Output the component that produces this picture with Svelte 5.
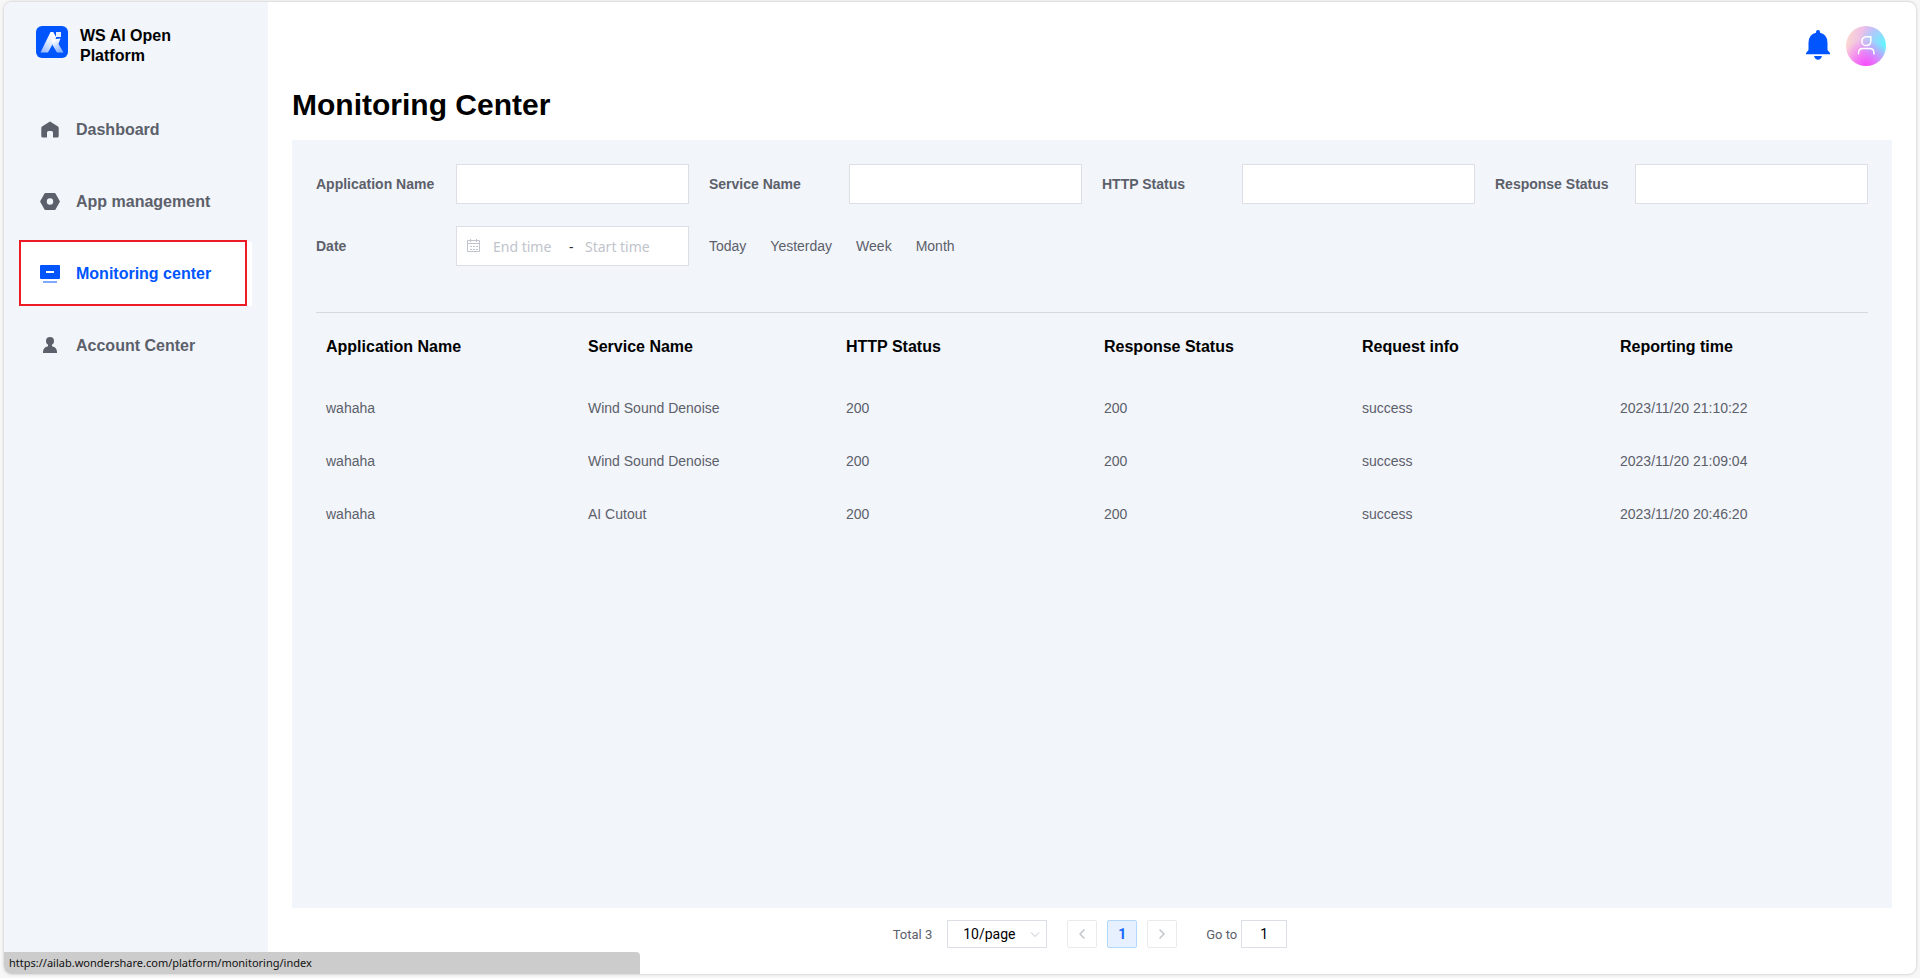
<script lang="ts">
  type MenuItem = { label: string; icon: "home" | "app" | "monitor" | "account" };

  type LogRow = {
    app: string;
    service: string;
    http: number;
    response: number;
    info: string;
    time: string;
  };

  const menu: MenuItem[] = [
    { label: "Dashboard", icon: "home" },
    { label: "App management", icon: "app" },
    { label: "Monitoring center", icon: "monitor" },
    { label: "Account Center", icon: "account" },
  ];

  const fields = [
    { id: "app-name", label: "Application Name" },
    { id: "service-name", label: "Service Name" },
    { id: "http-status", label: "HTTP Status" },
    { id: "response-status", label: "Response Status" },
  ];

  const ranges = ["Today", "Yesterday", "Week", "Month"];

  const columns = [
    "Application Name",
    "Service Name",
    "HTTP Status",
    "Response Status",
    "Request info",
    "Reporting time",
  ];

  const rows: LogRow[] = [
    { app: "wahaha", service: "Wind Sound Denoise", http: 200, response: 200, info: "success", time: "2023/11/20 21:10:22" },
    { app: "wahaha", service: "Wind Sound Denoise", http: 200, response: 200, info: "success", time: "2023/11/20 21:09:04" },
    { app: "wahaha", service: "AI Cutout", http: 200, response: 200, info: "success", time: "2023/11/20 20:46:20" },
  ];

  let active = $state("Monitoring center");
  let page = $state("1");
</script>

<div class="window">
  <aside class="sidebar">
    <div class="brand">
      <svg class="logo" viewBox="0 0 32 32" aria-hidden="true">
        <defs>
          <linearGradient id="peak" x1="0.7" y1="0" x2="0.2" y2="1">
            <stop offset="0" stop-color="#fff" />
            <stop offset="0.45" stop-color="#e4edff" />
            <stop offset="1" stop-color="#9dbdff" />
          </linearGradient>
          <linearGradient id="leg" x1="0" y1="0" x2="0.5" y2="1">
            <stop offset="0.2" stop-color="#fff" />
            <stop offset="1" stop-color="#8db3ff" />
          </linearGradient>
        </defs>
        <rect width="32" height="32" rx="6" fill="#0055ff" />
        <path d="M14.500 6h2.800l3 5.500L12 26.500H4.500z" fill="url(#peak)" />
        <path d="M16 13.500 24.500 12.500 22.500 18 27.500 26.500H21L16.500 19z" fill="url(#leg)" />
        <rect x="20" y="6" width="5" height="5" fill="#e8f0ff" />
      </svg>
      <span class="brand-name">WS AI Open Platform</span>
    </div>
    <nav class="menu">
      {#each menu as item}
        <a
          href="#{item.icon}"
          class="menu-item"
          class:active={active === item.label}
          onclick={() => (active = item.label)}
        >
          <svg class="menu-icon" viewBox="0 0 20 20" fill="currentColor" aria-hidden="true">
            {#if item.icon === "home"}
              <path d="M10 1.500 18 6.500Q18.700 7 18.700 8V16Q18.700 17.500 17.300 17.500H13V12.500Q13 11 11.500 11H8.500Q7 11 7 12.500V17.500H2.700Q1.300 17.500 1.300 16V8Q1.300 7 2 6.500z" />
            {:else if item.icon === "app"}
              <path fill-rule="evenodd" d="M5.500 1h9q.7 0 1 .6l4.200 7.300q.3.600 0 1.200l-4.200 7.300q-.3.600-1 .6h-9q-.7 0-1-.6L.3 10.100q-.3-.6 0-1.200l4.200-7.300q.3-.6 1-.6zM10 6.300a3.200 3.200 0 1 0 0 6.400 3.200 3.200 0 0 0 0-6.400z" />
            {:else if item.icon === "monitor"}
              <path fill-rule="evenodd" d="M1 1h18q1 0 1 1v12q0 1-1 1H1q-1 0-1-1V2q0-1 1-1zM6 7v2h8V7z" />
              <path d="M3 17h14v2H3z" opacity="0.5" />
            {:else}
              <circle cx="10" cy="5" r="4" />
              <path d="M8 8h4v2.200q5 1 5 5.800v1H3v-1q0-4.800 5-5.800z" />
            {/if}
          </svg>
          {item.label}
          {#if active === item.label}
            <span class="marker"></span>
          {/if}
        </a>
      {/each}
    </nav>
  </aside>

  <main class="main">
    <header class="topbar">
      <button class="bell" aria-label="Notifications">
        <svg viewBox="0 0 24 30" fill="#0055ff" aria-hidden="true">
          <path d="M10 2a2 2 0 0 1 4 0v.7q7.500 1.800 7.500 10V20l2.500 3v1.300H0V23l2.500-3v-7.300q0-8.200 7.500-10z" />
          <path d="M8 26h8q-1 3.700-4 3.700T8 26z" />
        </svg>
      </button>
      <button class="avatar" aria-label="Account">
        <svg viewBox="0 0 40 40" fill="none" stroke="#fff" stroke-width="1.500" aria-hidden="true">
          <path d="M25.500 10.800h-5.300a4.400 4.400 0 0 0-4.400 4.400 4.400 4.400 0 0 0 4.400 4.400c3 0 4.600-2 4.600-4.500v-4.300M12.500 28.500V27q0-4.500 4.500-4.500h6.500q4.500 0 4.500 4.500v1.500" />
        </svg>
      </button>
    </header>

    <h1>Monitoring Center</h1>

    <section class="panel">
      <form class="filters">
        {#each fields as field}
          <div class="field">
            <label for={field.id}>{field.label}</label>
            <input class="box" id={field.id} type="text" />
          </div>
        {/each}
        <div class="field">
          <label for="date-from">Date</label>
          <div class="box range">
            <svg class="calendar" viewBox="0 0 14 14" fill="none" stroke="#c0c4cc" aria-hidden="true">
              <path d="M.5 1.500h12v11H.5zM.5 4.500h12M3.500 0v3M9.500 0v3" />
              <path d="M3 7.500h8M3 10.500h8" stroke-dasharray="2 1" />
            </svg>
            <input id="date-from" type="text" placeholder="End time" />
            <span class="dash">-</span>
            <input type="text" placeholder="Start time" aria-label="Start time" />
          </div>
        </div>
        <div class="quick">
          {#each ranges as range}
            <button type="button">{range}</button>
          {/each}
        </div>
      </form>

      <table>
        <thead>
          <tr>
            {#each columns as column}
              <th>{column}</th>
            {/each}
          </tr>
        </thead>
        <tbody>
          {#each rows as row}
            <tr>
              <td>{row.app}</td>
              <td>{row.service}</td>
              <td>{row.http}</td>
              <td>{row.response}</td>
              <td>{row.info}</td>
              <td>{row.time}</td>
            </tr>
          {/each}
        </tbody>
      </table>
    </section>

    <footer class="pagination">
      <span class="total">Total {rows.length}</span>
      <div class="page-size">
        <select aria-label="Page size">
          <option>10/page</option>
          <option>20/page</option>
          <option>50/page</option>
        </select>
        <svg viewBox="0 0 10 6" fill="none" stroke="#c0c4cc" aria-hidden="true"><path d="M1 .5l4 4 4-4" /></svg>
      </div>
      <div class="pager">
        <button aria-label="Previous page">
          <svg viewBox="0 0 6 10" fill="none" stroke="#c0c4cc" stroke-width="1.500"><path d="M5.500.5 1 5l4.500 4.500" /></svg>
        </button>
        <button class="current">1</button>
        <button aria-label="Next page">
          <svg viewBox="0 0 6 10" fill="none" stroke="#c0c4cc" stroke-width="1.500"><path d="M.5.5 5 5 .5 9.500" /></svg>
        </button>
      </div>
      <label class="jump">
        Go to
        <input type="text" bind:value={page} />
      </label>
    </footer>
  </main>

  <div class="status">https://ailab.wondershare.com/platform/monitoring/index</div>
</div>

<style>
  :global(body) {
    background: #f7f7f7;
    font-family: "Liberation Sans", Arial, sans-serif;
    font-size: 14px;
    color: #5c606a;
  }
  :global(#app) {
    padding: 2px 0 4px;
  }
  * {
    box-sizing: border-box;
  }
  button {
    border: 0;
    padding: 0;
    background: none;
    font: inherit;
    color: inherit;
    cursor: pointer;
  }
  input,
  select {
    font: inherit;
    outline: none;
  }

  .window {
    position: relative;
    display: flex;
    min-height: calc(100vh - 6px);
    margin: 0 4px;
    border-radius: 8px;
    overflow: hidden;
    background: #fff;
    box-shadow: 0 0 3px rgba(0, 0, 0, 0.25);
  }

  .sidebar {
    width: 264px;
    flex-shrink: 0;
    padding-top: 24px;
    background: #f2f5fa;
  }
  .brand {
    display: flex;
    gap: 12px;
    padding: 0 32px;
  }
  .logo {
    width: 32px;
    height: 32px;
  }
  .brand-name {
    width: 120px;
    font-size: 16px;
    font-weight: 700;
    line-height: 20px;
    color: #000;
  }
  .menu {
    display: flex;
    flex-direction: column;
    gap: 8px;
    padding: 32px 16px 0;
  }
  .menu-item {
    position: relative;
    display: flex;
    align-items: center;
    gap: 16px;
    height: 64px;
    padding: 0 20px;
    font-size: 16px;
    font-weight: 700;
    color: #5c606a;
    text-decoration: none;
  }
  .menu-item.active {
    color: #0055ff;
    background: #fff;
  }
  .menu-icon {
    width: 20px;
    height: 20px;
  }
  .marker {
    position: absolute;
    top: -2px;
    left: -1px;
    right: 5px;
    bottom: 0;
    border: 2px solid #ed1c24;
  }

  .main {
    flex: 1;
    display: flex;
    flex-direction: column;
    min-width: 0;
    padding: 24px 24px 26px;
  }
  .topbar {
    display: flex;
    justify-content: flex-end;
    gap: 16px;
    padding-right: 6px;
  }
  .bell {
    width: 24px;
    height: 38px;
  }
  .bell svg,
  .avatar svg {
    display: block;
  }
  .avatar {
    width: 40px;
    height: 40px;
    border-radius: 50%;
    background:
      radial-gradient(circle at 50% 100%, #f74cfb 0%, rgba(247, 76, 251, 0) 60%),
      radial-gradient(circle at 100% 45%, #5cf8ff 0%, rgba(92, 248, 255, 0) 60%),
      linear-gradient(100deg, #ffdccb, #e3adfa 60%);
  }
  h1 {
    margin: 21px 0 17px;
    font-size: 30px;
    line-height: 36px;
    font-weight: 700;
    color: #000;
  }

  .panel {
    flex: 1;
    padding: 24px;
    background: #f2f5fa;
  }
  .filters {
    display: grid;
    grid-template-columns: repeat(4, 1fr);
    gap: 22px 20px;
    padding-bottom: 46px;
    border-bottom: 1px solid #d5d9e0;
  }
  .field {
    display: flex;
    align-items: center;
  }
  .field > label {
    width: 140px;
    flex-shrink: 0;
    font-weight: 700;
  }
  .box {
    flex: 1;
    min-width: 0;
    height: 40px;
    padding: 0 10px;
    border: 1px solid #dcdfe6;
    background: #fff;
  }
  .range {
    display: flex;
    align-items: center;
    font-family: "Noto Sans", "Open Sans", sans-serif;
  }
  .calendar {
    width: 14px;
    height: 14px;
    flex-shrink: 0;
    margin-right: 12px;
  }
  .range input {
    width: 72px;
    padding: 0;
    border: 0;
    background: none;
  }
  .range input::placeholder {
    color: #c0c4cc;
  }
  .dash {
    width: 20px;
    padding-left: 4px;
    color: #303133;
  }
  .quick {
    display: flex;
    align-items: center;
    gap: 24px;
  }

  table {
    width: 100%;
    table-layout: fixed;
    border-collapse: collapse;
  }
  th,
  td {
    padding: 0 10px;
    text-align: left;
  }
  th {
    height: 68px;
    font-size: 16px;
    color: #000;
  }
  th:first-child {
    width: 262px;
  }
  td {
    height: 53px;
  }

  .pagination {
    display: flex;
    justify-content: center;
    align-items: center;
    padding: 12px 4px 0 0;
    font-family: Roboto, sans-serif;
  }
  .total {
    margin-right: 15px;
    font-size: 13px;
  }
  .page-size {
    position: relative;
    width: 100px;
    margin-right: 20px;
  }
  .page-size select {
    display: block;
    width: 100%;
    height: 28px;
    padding: 0 15px;
    border: 1px solid #dcdfe6;
    background: #fff;
    color: #000;
    appearance: none;
  }
  .page-size svg {
    position: absolute;
    top: 12px;
    right: 7px;
    width: 10px;
    height: 6px;
    pointer-events: none;
  }
  .pager {
    display: flex;
    gap: 10px;
    margin-right: 29px;
  }
  .pager button {
    display: flex;
    align-items: center;
    justify-content: center;
    width: 30px;
    height: 28px;
    border: 1px solid #e9eaee;
    border-radius: 2px;
  }
  .pager .current {
    border-color: #b3d8ff;
    background: #e6f0ff;
    color: #1668ff;
    font-weight: 700;
  }
  .pager svg {
    width: 6px;
    height: 10px;
  }
  .jump {
    display: flex;
    align-items: center;
    gap: 4px;
    font-size: 13px;
  }
  .jump input {
    width: 46px;
    height: 28px;
    padding: 0;
    border: 1px solid #dcdfe6;
    font-size: 14px;
    text-align: center;
    color: #000;
  }

  .status {
    position: absolute;
    left: 0;
    bottom: 0;
    width: 636px;
    height: 22px;
    padding-left: 5px;
    border-top-right-radius: 4px;
    background: #cccccc;
    font-family: "Noto Sans", "Open Sans", sans-serif;
    font-size: 11px;
    line-height: 22px;
    color: #111;
  }
</style>
